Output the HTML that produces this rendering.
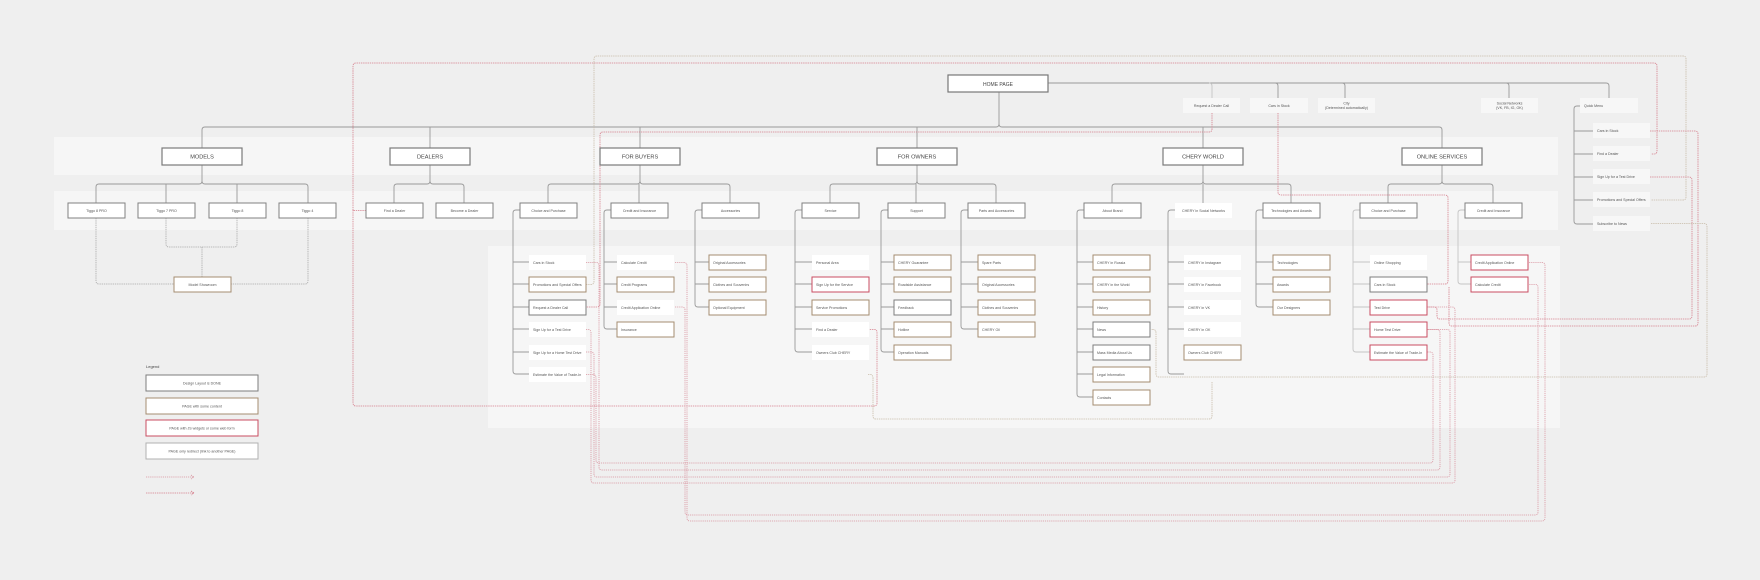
<!DOCTYPE html>
<html><head><meta charset="utf-8"><style>
html,body{margin:0;padding:0;background:#efefef;width:1760px;height:580px;overflow:hidden}
svg{display:block}
text{font-family:"Liberation Sans",sans-serif;fill:#555}
.t{font-size:3.6px}
.c{text-anchor:middle}
.l1{font-size:5.6px;fill:#444}
.g{fill:none;stroke:#9a9a9a;stroke-width:0.9}
.gl{fill:none;stroke:#c4c4c4;stroke-width:0.9}
.gd{fill:none;stroke:#a9a9a9;stroke-width:0.8;stroke-dasharray:1.4 0.8}
.rd{fill:none;stroke:#d57d8b;stroke-width:0.8;stroke-dasharray:1.4 0.8}
.rd2{fill:none;stroke:#d9939f;stroke-width:0.8;stroke-dasharray:1.2 0.9}
.bd{fill:none;stroke:#c7bba8;stroke-width:0.8;stroke-dasharray:1.4 0.8}
</style></head><body>
<svg width="1760" height="580" viewBox="0 0 1760 580" xmlns="http://www.w3.org/2000/svg">
<!-- bands -->
<rect x="54" y="137" width="1504" height="38" fill="#f6f6f6"/>
<rect x="54" y="191" width="1504" height="39" fill="#f6f6f6"/>
<rect x="488" y="246" width="1072" height="182" fill="#f6f6f6"/>

<!-- home connectors -->
<path class="g" d="M1048 83 H1606 Q1609 83 1609 86 V98"/>
<path class="gl" d="M1209 83 Q1212 83 1212 86 V98"/>
<path class="g" d="M1275 83 Q1278 83 1278 86 V98 M1342 83 Q1345 83 1345 86 V98 M1506 83 Q1509 83 1509 86 V98"/>
<path class="g" d="M999 92 V124 Q999 127 996 127 H205 Q202 127 202 130 V148 M999 124 Q999 127 1002 127 H1439 Q1442 127 1442 130 V148 M430 127 V148 M640 127 V148 M917 127 V148 M1203 127 V148"/>
<!-- level1->level2 -->
<path class="g" d="M202 165 V181 Q202 184 199 184 H99 Q96 184 96 187 V203 M202 181 Q202 184 205 184 H305 Q308 184 308 187 V203 M166 184 V203 M237 184 V203"/>
<path class="g" d="M430 165 V181 Q430 184 427 184 H397 Q394 184 394 187 V203 M430 181 Q430 184 433 184 H461 Q464 184 464 187 V203"/>
<path class="g" d="M640 165 V181 Q640 184 637 184 H551 Q548 184 548 187 V203 M640 181 Q640 184 643 184 H727 Q730 184 730 187 V203 M639 184 V203"/>
<path class="g" d="M917 165 V181 Q917 184 914 184 H833 Q830 184 830 187 V203 M917 181 Q917 184 920 184 H993 Q996 184 996 187 V203 M916 184 V203"/>
<path class="g" d="M1203 165 V181 Q1203 184 1200 184 H1115 Q1112 184 1112 187 V203 M1203 181 Q1203 184 1206 184 H1288 Q1291 184 1291 187 V203 M1203 184 V203"/>
<path class="g" d="M1442 165 V181 Q1442 184 1439 184 H1391 Q1388 184 1388 187 V203 M1442 181 Q1442 184 1445 184 H1490 Q1493 184 1493 187 V203"/>
<!-- quick menu -->
<path class="g" d="M1580 106 H1577 Q1574 106 1574 109 V221 Q1574 224 1577 224 H1593 M1574 131 H1593 M1574 154 H1593 M1574 177 H1593 M1574 200 H1593"/>

<!-- level3 vertical connectors -->
<path class="g" d="M520 210 H516 Q513 210 513 213 V371 Q513 374 516 374 H529 M513 262 H529 M513 284 H529 M513 307 H529 M513 329 H529 M513 352 H529"/>
<path class="g" d="M611 210 H607 Q604 210 604 213 V326 Q604 329 607 329 H617 M604 262 H617 M604 284 H617 M604 307 H617"/>
<path class="g" d="M702 210 H698 Q695 210 695 213 V304 Q695 307 698 307 H709 M695 262 H709 M695 284 H709"/>
<path class="g" d="M802 210 H798 Q795 210 795 213 V349 Q795 352 798 352 H812 M795 262 H812 M795 284 H812 M795 307 H812 M795 329 H812"/>
<path class="g" d="M888 210 H884 Q881 210 881 213 V349 Q881 352 884 352 H894 M881 262 H894 M881 284 H894 M881 307 H894 M881 329 H894"/>
<path class="g" d="M968 210 H964 Q961 210 961 213 V326 Q961 329 964 329 H978 M961 262 H978 M961 284 H978 M961 307 H978"/>
<path class="g" d="M1084 210 H1080 Q1077 210 1077 213 V394 Q1077 397 1080 397 H1093 M1077 262 H1093 M1077 284 H1093 M1077 307 H1093 M1077 329 H1093 M1077 352 H1093 M1077 374 H1093"/>
<path class="g" d="M1175 210 H1171 Q1168 210 1168 213 V371 Q1168 374 1171 374 H1184 M1168 262 H1184 M1168 284 H1184 M1168 307 H1184 M1168 329 H1184"/>
<path class="g" d="M1263 210 H1259 Q1256 210 1256 213 V304 Q1256 307 1259 307 H1273 M1256 262 H1273 M1256 284 H1273"/>
<path class="gl" d="M1360 210 H1356 Q1353 210 1353 213 V349 Q1353 352 1356 352 H1370 M1353 262 H1370 M1353 284 H1370 M1353 307 H1370 M1353 329 H1370"/>
<path class="gl" d="M1465 210 H1461 Q1458 210 1458 213 V281 Q1458 284 1461 284 H1471 M1458 262 H1471"/>

<!-- model showroom dotted -->
<path class="gd" d="M96 218 V281 Q96 284 99 284 H174 M308 218 V281 Q308 284 305 284 H231 M166 218 V244 Q166 247 169 247 H234 Q237 247 237 244 V218 M202 247 V277"/>

<!-- long dotted connectors -->
<path class="rd" d="M366 210.5 H353 V66 Q353 63 356 63 H1654 Q1657 63 1657 66 V151 Q1657 154 1654 154 H1651 M353 210 V403 Q353 406 356 406 H874 Q877 406 877 403 V332 Q877 329.5 874 329.5 H868"/>
<path class="bd" d="M586 284.5 H591 Q594 284.5 594 281 V59 Q594 56 597 56 H1683 Q1686 56 1686 59 V197 Q1686 200 1683 200 H1651"/>
<path class="rd" d="M1212 113 V129 Q1212 132 1209 132 H603 Q600 132 600 135 V304 Q600 307 597 307 H586"/>
<path class="rd" d="M1278 113 V192 Q1278 195 1281 195 H1445 Q1448 195 1448 198 V281 Q1448 284 1445 284 H1427"/>
<path class="rd" d="M1650 131 H1695 Q1698 131 1698 134 V323 Q1698 326 1695 326 H1452 Q1449 326 1449 323 V287"/>
<path class="rd" d="M1650 177 H1689 Q1692 177 1692 180 V316 Q1692 319 1689 319 H1440 Q1437 319 1437 316 V310 Q1437 307 1434 307 H1427"/>
<path class="rd2" d="M586 262.5 H596 Q599 262.5 599 266 V467 Q599 470 602 470 H1437 Q1440 470 1440 467 V333 Q1440 329.5 1437 329.5 H1427"/>
<path class="rd2" d="M586 329.5 H588 Q591 329.5 591 333 V480 Q591 483 594 483 H1452 Q1455 483 1455 480 V310 Q1455 307 1452 307 H1427"/>
<path class="rd2" d="M586 352 H590 Q594 352 594 355 V474 Q594 477 597 477 H1447 Q1450 477 1450 474 V332 Q1450 329.5 1447 329.5 H1427"/>
<path class="rd2" d="M586 374.5 H593 Q596 374.5 596 378 V460 Q596 463 599 463 H1430 Q1433 463 1433 460 V355 Q1433 352 1430 352 H1427"/>
<path class="rd2" d="M675 262.5 H684 Q687 262.5 687 266 V518 Q687 521 690 521 H1542 Q1545 521 1545 518 V266 Q1545 262.5 1542 262.5 H1529"/>
<path class="rd2" d="M675 307 H682 Q685 307 685 310 V512 Q685 515 688 515 H1535 Q1538 515 1538 512 V287 Q1538 284.5 1535 284.5 H1529"/>
<path class="bd" d="M868 374.5 H870 Q873 374.5 873 378 V416 Q873 419 876 419 H1209 Q1212 419 1212 416 V382"/>
<path class="bd" d="M1651 223.5 H1704 Q1707 223.5 1707 227 V374 Q1707 377 1704 377 H1159 Q1156 377 1156 374 V333 Q1156 329.5 1153 329.5 H1151"/>

<!-- home + top boxes -->
<rect x="948" y="75" width="100" height="17" fill="#fff" stroke="#777" stroke-width="1.2"/>
<text class="l1 c" x="998" y="85.8" style="font-size:5px">HOME PAGE</text>
<rect x="1183" y="98" width="57" height="15" fill="#f7f7f7"/><text class="t c" x="1211.5" y="106.8">Request a Dealer Call</text>
<rect x="1250" y="98" width="58" height="15" fill="#f7f7f7"/><text class="t c" x="1279" y="106.8">Cars in Stock</text>
<rect x="1318" y="98" width="57" height="15" fill="#f7f7f7"/><text class="t c" x="1346.5" y="104.6">City</text><text class="t c" x="1346.5" y="109">(Determined automatically)</text>
<rect x="1481" y="98" width="57" height="15" fill="#f7f7f7"/><text class="t c" x="1509.5" y="104.6">Social Networks</text><text class="t c" x="1509.5" y="109">(VK, FB, IG, OK)</text>
<rect x="1580" y="98" width="58" height="15" fill="#f7f7f7"/><text class="t" x="1584" y="106.8">Quick Menu</text>
<g>
<rect x="1593" y="123" width="57" height="15" fill="#f7f7f7"/><text class="t" x="1597" y="131.8">Cars in Stock</text>
<rect x="1593" y="146" width="57" height="15" fill="#f7f7f7"/><text class="t" x="1597" y="154.8">Find a Dealer</text>
<rect x="1593" y="169" width="57" height="15" fill="#f7f7f7"/><text class="t" x="1597" y="177.8">Sign Up for a Test Drive</text>
<rect x="1593" y="192" width="57" height="15" fill="#f7f7f7"/><text class="t" x="1597" y="200.8">Promotions and Special Offers</text>
<rect x="1593" y="216" width="57" height="15" fill="#f7f7f7"/><text class="t" x="1597" y="224.8">Subscribe to News</text>
</g>

<!-- level1 -->
<g fill="#fff" stroke="#7a7a7a" stroke-width="1.2">
<rect x="162" y="148" width="80" height="17"/><rect x="390" y="148" width="80" height="17"/><rect x="600" y="148" width="80" height="17"/>
<rect x="877" y="148" width="80" height="17"/><rect x="1163" y="148" width="80" height="17"/><rect x="1402" y="148" width="80" height="17"/>
</g>
<text class="l1 c" x="202" y="158.5">MODELS</text><text class="l1 c" x="430" y="158.5">DEALERS</text><text class="l1 c" x="640" y="158.5">FOR BUYERS</text>
<text class="l1 c" x="917" y="158.5">FOR OWNERS</text><text class="l1 c" x="1203" y="158.5">CHERY WORLD</text><text class="l1 c" x="1442" y="158.5">ONLINE SERVICES</text>

<!-- level2 -->
<g fill="#fff" stroke="#808080" stroke-width="1">
<rect x="68" y="203" width="57" height="15"/><rect x="138" y="203" width="57" height="15"/><rect x="209" y="203" width="57" height="15"/><rect x="279" y="203" width="57" height="15"/>
<rect x="366" y="203" width="57" height="15"/><rect x="436" y="203" width="57" height="15"/><rect x="520" y="203" width="57" height="15"/><rect x="611" y="203" width="57" height="15"/>
<rect x="702" y="203" width="57" height="15"/><rect x="802" y="203" width="57" height="15"/><rect x="888" y="203" width="57" height="15"/><rect x="968" y="203" width="57" height="15"/>
<rect x="1084" y="203" width="57" height="15"/><rect x="1263" y="203" width="57" height="15"/><rect x="1360" y="203" width="57" height="15"/><rect x="1465" y="203" width="57" height="15"/>
</g>
<rect x="1175" y="203" width="57" height="15" fill="#fff"/>
<g class="t">
<text class="t c" x="96.5" y="211.8">Tiggo 8 PRO</text><text class="t c" x="166.5" y="211.8">Tiggo 7 PRO</text><text class="t c" x="237.5" y="211.8">Tiggo 8</text><text class="t c" x="307.5" y="211.8">Tiggo 4</text>
<text class="t c" x="394.5" y="211.8">Find a Dealer</text><text class="t c" x="464.5" y="211.8">Become a Dealer</text><text class="t c" x="548.5" y="211.8">Choice and Purchase</text><text class="t c" x="639.5" y="211.8">Credit and Insurance</text>
<text class="t c" x="730.5" y="211.8">Accessories</text><text class="t c" x="830.5" y="211.8">Service</text><text class="t c" x="916.5" y="211.8">Support</text><text class="t c" x="996.5" y="211.8">Parts and Accessories</text>
<text class="t c" x="1112.5" y="211.8">About Brand</text><text class="t c" x="1203.5" y="211.8">CHERY in Social Networks</text><text class="t c" x="1291.5" y="211.8">Technologies and Awards</text><text class="t c" x="1388.5" y="211.8">Choice and Purchase</text><text class="t c" x="1493.5" y="211.8">Credit and Insurance</text>
</g>
<rect x="174" y="277" width="57" height="15" fill="#fff" stroke="#a48c70" stroke-width="1"/><text class="t c" x="202.5" y="285.8">Model Showroom</text>

<!-- level3 items: w = white, b = beige, g = gray, r = red -->
<g stroke-width="1">
<!-- Choice col x529 -->
<rect x="529" y="255" width="57" height="15" fill="#fff"/>
<rect x="529" y="277" width="57" height="15" fill="#fff" stroke="#a48c70"/>
<rect x="529" y="300" width="57" height="15" fill="#fff" stroke="#7d7d7d"/>
<rect x="529" y="322" width="57" height="15" fill="#fff"/>
<rect x="529" y="345" width="57" height="15" fill="#fff"/>
<rect x="529" y="367" width="57" height="15" fill="#fff"/>
<!-- Credit col 617 -->
<rect x="617" y="255" width="57" height="15" fill="#fff"/>
<rect x="617" y="277" width="57" height="15" fill="#fff" stroke="#a48c70"/>
<rect x="617" y="300" width="57" height="15" fill="#fff"/>
<rect x="617" y="322" width="57" height="15" fill="#fff" stroke="#a48c70"/>
<!-- Accessories 709 -->
<rect x="709" y="255" width="57" height="15" fill="#fff" stroke="#a48c70"/>
<rect x="709" y="277" width="57" height="15" fill="#fff" stroke="#a48c70"/>
<rect x="709" y="300" width="57" height="15" fill="#fff" stroke="#a48c70"/>
<!-- Service 812 -->
<rect x="812" y="255" width="57" height="15" fill="#fff"/>
<rect x="812" y="277" width="57" height="15" fill="#fff" stroke="#c94c62"/>
<rect x="812" y="300" width="57" height="15" fill="#fff" stroke="#a48c70"/>
<rect x="812" y="322" width="57" height="15" fill="#fff"/>
<rect x="812" y="345" width="57" height="15" fill="#fff"/>
<!-- Support 894 -->
<rect x="894" y="255" width="57" height="15" fill="#fff" stroke="#a48c70"/>
<rect x="894" y="277" width="57" height="15" fill="#fff" stroke="#a48c70"/>
<rect x="894" y="300" width="57" height="15" fill="#fff" stroke="#7d7d7d"/>
<rect x="894" y="322" width="57" height="15" fill="#fff" stroke="#a48c70"/>
<rect x="894" y="345" width="57" height="15" fill="#fff" stroke="#a48c70"/>
<!-- Parts 978 -->
<rect x="978" y="255" width="57" height="15" fill="#fff" stroke="#a48c70"/>
<rect x="978" y="277" width="57" height="15" fill="#fff" stroke="#a48c70"/>
<rect x="978" y="300" width="57" height="15" fill="#fff" stroke="#a48c70"/>
<rect x="978" y="322" width="57" height="15" fill="#fff" stroke="#a48c70"/>
<!-- About 1093 -->
<rect x="1093" y="255" width="57" height="15" fill="#fff" stroke="#a48c70"/>
<rect x="1093" y="277" width="57" height="15" fill="#fff" stroke="#a48c70"/>
<rect x="1093" y="300" width="57" height="15" fill="#fff" stroke="#a48c70"/>
<rect x="1093" y="322" width="57" height="15" fill="#fff" stroke="#7d7d7d"/>
<rect x="1093" y="345" width="57" height="15" fill="#fff" stroke="#7d7d7d"/>
<rect x="1093" y="367" width="57" height="15" fill="#fff" stroke="#a48c70"/>
<rect x="1093" y="390" width="57" height="15" fill="#fff" stroke="#a48c70"/>
<!-- Social 1184 -->
<rect x="1184" y="255" width="57" height="15" fill="#fff"/>
<rect x="1184" y="277" width="57" height="15" fill="#fff"/>
<rect x="1184" y="300" width="57" height="15" fill="#fff"/>
<rect x="1184" y="322" width="57" height="15" fill="#fff"/>
<rect x="1184" y="345" width="57" height="15" fill="#fff" stroke="#a48c70"/>
<!-- Tech 1273 -->
<rect x="1273" y="255" width="57" height="15" fill="#fff" stroke="#a48c70"/>
<rect x="1273" y="277" width="57" height="15" fill="#fff" stroke="#a48c70"/>
<rect x="1273" y="300" width="57" height="15" fill="#fff" stroke="#a48c70"/>
<!-- OS Choice 1370 -->
<rect x="1370" y="255" width="57" height="15" fill="#fff"/>
<rect x="1370" y="277" width="57" height="15" fill="#fff" stroke="#7d7d7d"/>
<rect x="1370" y="300" width="57" height="15" fill="#fff" stroke="#c94c62"/>
<rect x="1370" y="322" width="57" height="15" fill="#fff" stroke="#c94c62"/>
<rect x="1370" y="345" width="57" height="15" fill="#fff" stroke="#c94c62"/>
<!-- OS Credit 1471 -->
<rect x="1471" y="255" width="57" height="15" fill="#fff" stroke="#c94c62"/>
<rect x="1471" y="277" width="57" height="15" fill="#fff" stroke="#c94c62"/>
</g>
<g>
<text class="t" x="533" y="263.8">Cars in Stock</text><text class="t" x="533" y="285.8">Promotions and Special Offers</text><text class="t" x="533" y="308.8">Request a Dealer Call</text><text class="t" x="533" y="330.8">Sign Up for a Test Drive</text><text class="t" x="533" y="353.8">Sign Up for a Home Test Drive</text><text class="t" x="533" y="375.8">Estimate the Value of Trade-In</text>
<text class="t" x="621" y="263.8">Calculate Credit</text><text class="t" x="621" y="285.8">Credit Programs</text><text class="t" x="621" y="308.8">Credit Application Online</text><text class="t" x="621" y="330.8">Insurance</text>
<text class="t" x="713" y="263.8">Original Accessories</text><text class="t" x="713" y="285.8">Clothes and Souvenirs</text><text class="t" x="713" y="308.8">Optional Equipment</text>
<text class="t" x="816" y="263.8">Personal Area</text><text class="t" x="816" y="285.8">Sign Up for the Service</text><text class="t" x="816" y="308.8">Service Promotions</text><text class="t" x="816" y="330.8">Find a Dealer</text><text class="t" x="816" y="353.8">Owners Club CHERY</text>
<text class="t" x="898" y="263.8">CHERY Guarantee</text><text class="t" x="898" y="285.8">Roadside Assistance</text><text class="t" x="898" y="308.8">Feedback</text><text class="t" x="898" y="330.8">Hotline</text><text class="t" x="898" y="353.8">Operation Manuals</text>
<text class="t" x="982" y="263.8">Spare Parts</text><text class="t" x="982" y="285.8">Original Accessories</text><text class="t" x="982" y="308.8">Clothes and Souvenirs</text><text class="t" x="982" y="330.8">CHERY Oil</text>
<text class="t" x="1097" y="263.8">CHERY in Russia</text><text class="t" x="1097" y="285.8">CHERY in the World</text><text class="t" x="1097" y="308.8">History</text><text class="t" x="1097" y="330.8">News</text><text class="t" x="1097" y="353.8">Mass Media About Us</text><text class="t" x="1097" y="375.8">Legal Information</text><text class="t" x="1097" y="398.8">Contacts</text>
<text class="t" x="1188" y="263.8">CHERY in Instagram</text><text class="t" x="1188" y="285.8">CHERY in Facebook</text><text class="t" x="1188" y="308.8">CHERY in VK</text><text class="t" x="1188" y="330.8">CHERY in OK</text><text class="t" x="1188" y="353.8">Owners Club CHERY</text>
<text class="t" x="1277" y="263.8">Technologies</text><text class="t" x="1277" y="285.8">Awards</text><text class="t" x="1277" y="308.8">Our Designers</text>
<text class="t" x="1374" y="263.8">Online Shopping</text><text class="t" x="1374" y="285.8">Cars in Stock</text><text class="t" x="1374" y="308.8">Test Drive</text><text class="t" x="1374" y="330.8">Home Test Drive</text><text class="t" x="1374" y="353.8">Estimate the Value of Trade-In</text>
<text class="t" x="1475" y="263.8">Credit Application Online</text><text class="t" x="1475" y="285.8">Calculate Credit</text>
</g>

<!-- legend -->
<text class="t" x="146" y="368" style="font-size:4px;fill:#444">Legend</text>
<rect x="146" y="375" width="112" height="16" fill="#fff" stroke="#7d7d7d" stroke-width="1"/><text class="t c" x="202" y="384.3">Design Layout is DONE</text>
<rect x="146" y="398" width="112" height="16" fill="#fff" stroke="#a48c70" stroke-width="1"/><text class="t c" x="202" y="407.3">PAGE with some content</text>
<rect x="146" y="420" width="112" height="16" fill="#fff" stroke="#c94c62" stroke-width="1"/><text class="t c" x="202" y="429.3">PAGE with JS widgets or some web form</text>
<rect x="146" y="443" width="112" height="16" fill="#fff" stroke="#b0b0b0" stroke-width="1"/><text class="t c" x="202" y="452.3">PAGE only redirect (link to another PAGE)</text>
<path class="rd2" d="M146 477 H194 M191 475 L194 477 L191 479"/>
<path class="rd" d="M146 493 H194 M191 491 L194 493 L191 495"/>
</svg>
</body></html>
